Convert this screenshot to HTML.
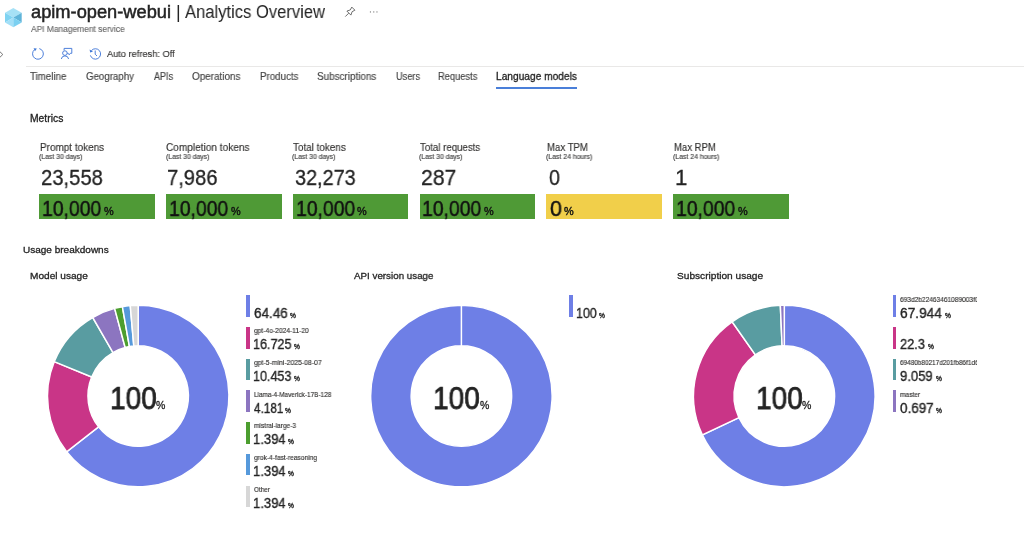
<!DOCTYPE html>
<html><head><meta charset="utf-8"><style>
html,body{margin:0;padding:0;background:#fff;width:1024px;height:534px;overflow:hidden;position:relative;font-family:"Liberation Sans", sans-serif;}
.t{position:absolute;white-space:nowrap;will-change:transform;}
.bar{position:absolute;top:194.4px;width:115.8px;height:24.5px;}
.lb{position:absolute;width:3.5px;height:21.7px;}
.hr{position:absolute;left:26px;top:66px;width:998px;height:1px;background:#e9e8e7;}
.ul{position:absolute;left:496.2px;top:87.2px;width:81px;height:2px;background:#4a7fd9;}
</style></head><body>
<div class="hr"></div>
<div class="ul"></div>
<div class="bar" style="left:39.10px;background:#4f9a36"></div>
<div class="bar" style="left:165.90px;background:#4f9a36"></div>
<div class="bar" style="left:292.70px;background:#4f9a36"></div>
<div class="bar" style="left:419.50px;background:#4f9a36"></div>
<div class="bar" style="left:546.30px;background:#f1cf4a"></div>
<div class="bar" style="left:673.10px;background:#4f9a36"></div>
<div class="lb" style="left:246.2px;top:295.3px;background:#6e7fe6"></div>
<div class="lb" style="left:246.2px;top:327.0px;background:#c93587"></div>
<div class="lb" style="left:246.2px;top:358.7px;background:#599ca1"></div>
<div class="lb" style="left:246.2px;top:390.4px;background:#8c75c0"></div>
<div class="lb" style="left:246.2px;top:422.1px;background:#4c9e2f"></div>
<div class="lb" style="left:246.2px;top:453.8px;background:#5699db"></div>
<div class="lb" style="left:246.2px;top:485.5px;background:#d7d7d7"></div>
<div class="lb" style="left:569.3px;top:295.3px;background:#6e7fe6"></div>
<div class="lb" style="left:892.6px;top:295.3px;background:#6e7fe6"></div>
<div class="lb" style="left:892.6px;top:327.0px;background:#c93587"></div>
<div class="lb" style="left:892.6px;top:358.7px;background:#599ca1"></div>
<div class="lb" style="left:892.6px;top:390.4px;background:#8c75c0"></div>
<svg style="position:absolute;left:0;top:0" width="1024" height="534" viewBox="0 0 1024 534">
<path d="M138.20,305.25 A90.75,90.75 0 1,1 66.64,451.80 L98.57,426.90 A50.25,50.25 0 1,0 138.20,345.75 Z" fill="#6e7fe6" stroke="#fff" stroke-width="1.5" stroke-linejoin="miter"/>
<path d="M66.64,451.80 A90.75,90.75 0 0,1 54.22,361.62 L91.70,376.96 A50.25,50.25 0 0,0 98.57,426.90 Z" fill="#c93587" stroke="#fff" stroke-width="1.5" stroke-linejoin="miter"/>
<path d="M54.22,361.62 A90.75,90.75 0 0,1 92.68,317.49 L112.99,352.53 A50.25,50.25 0 0,0 91.70,376.96 Z" fill="#599ca1" stroke="#fff" stroke-width="1.5" stroke-linejoin="miter"/>
<path d="M92.68,317.49 A90.75,90.75 0 0,1 114.63,308.36 L125.15,347.47 A50.25,50.25 0 0,0 112.99,352.53 Z" fill="#8c75c0" stroke="#fff" stroke-width="1.5" stroke-linejoin="miter"/>
<path d="M114.63,308.36 A90.75,90.75 0 0,1 122.38,306.64 L129.44,346.52 A50.25,50.25 0 0,0 125.15,347.47 Z" fill="#4c9e2f" stroke="#fff" stroke-width="1.5" stroke-linejoin="miter"/>
<path d="M122.38,306.64 A90.75,90.75 0 0,1 130.26,305.60 L133.80,345.94 A50.25,50.25 0 0,0 129.44,346.52 Z" fill="#5699db" stroke="#fff" stroke-width="1.5" stroke-linejoin="miter"/>
<path d="M130.26,305.60 A90.75,90.75 0 0,1 138.20,305.25 L138.20,345.75 A50.25,50.25 0 0,0 133.80,345.94 Z" fill="#d7d7d7" stroke="#fff" stroke-width="1.5" stroke-linejoin="miter"/><path d="M461.40,305.25 A90.75,90.75 0 1,1 461.399,305.25 L461.399,345.75 A50.25,50.25 0 1,0 461.40,345.75 Z" fill="#6e7fe6" stroke="#fff" stroke-width="1.5"/><path d="M784.30,305.25 A90.75,90.75 0 1,1 702.32,434.93 L738.91,417.56 A50.25,50.25 0 1,0 784.30,345.75 Z" fill="#6e7fe6" stroke="#fff" stroke-width="1.5" stroke-linejoin="miter"/>
<path d="M702.32,434.93 A90.75,90.75 0 0,1 732.09,321.77 L755.39,354.90 A50.25,50.25 0 0,0 738.91,417.56 Z" fill="#c93587" stroke="#fff" stroke-width="1.5" stroke-linejoin="miter"/>
<path d="M732.09,321.77 A90.75,90.75 0 0,1 780.33,305.34 L782.10,345.80 A50.25,50.25 0 0,0 755.39,354.90 Z" fill="#599ca1" stroke="#fff" stroke-width="1.5" stroke-linejoin="miter"/>
<path d="M780.33,305.34 A90.75,90.75 0 0,1 784.30,305.25 L784.30,345.75 A50.25,50.25 0 0,0 782.10,345.80 Z" fill="#8c75c0" stroke="#fff" stroke-width="1.5" stroke-linejoin="miter"/>
<!-- cube -->
<g>
<polygon points="13.3,8 21.7,12.8 13.3,17.6 5,12.8" fill="#a6e1f6"/>
<polygon points="21.7,12.8 21.7,22.4 13.3,17.6" fill="#5fb4d9"/>
<polygon points="5,12.8 13.3,17.6 5,22.4" fill="#7fd3f2"/>
<polygon points="5,22.4 13.3,17.6 13.3,27.2" fill="#a3dff7"/>
<polygon points="13.3,17.6 21.7,22.4 13.3,27.2" fill="#7bd0f1"/>
</g>
<!-- pin -->
<g fill="none" stroke="#4a4a4a" stroke-width="0.8" stroke-linejoin="round">
<path d="M345.3,16.6 L348.7,13.2"/>
<path d="M346.9,11.1 L350.3,9.9 L351.8,7.1 L354.9,10.2 L352.1,11.7 L350.9,15.1 Z"/>
</g>
<g fill="#777">
<rect x="369.9" y="11.4" width="1.1" height="1.1"/>
<rect x="373.2" y="11.4" width="1.1" height="1.1"/>
<rect x="376.4" y="11.4" width="1.1" height="1.1"/>
</g>
<!-- chevron -->
<path d="M0,51.8 L2.8,54.5 L0,57.2" fill="none" stroke="#666" stroke-width="0.9"/>
<!-- refresh -->
<g fill="none" stroke="#4479d8" stroke-width="0.95">
<path d="M39.3,48.6 A5.4,5.4 0 1,1 34.6,49.6"/>
</g>
<path d="M33.6,48.2 L36.8,48.4 L35.0,51.3 Z" fill="#3f78d6"/>
<!-- feedback -->
<g fill="none" stroke="#4479d8" stroke-width="0.95" stroke-linejoin="miter">
<circle cx="64.9" cy="53.1" r="2.3"/>
<path d="M61.3,59 A3.7,3.7 0 0,1 68.6,59"/>
<path d="M64.1,50.4 L64.1,48.4 L71.8,48.4 L71.8,53.3 L70.3,53.3 L69.2,54.8 L68.2,53.3 L67.3,53.3"/>
</g>
<!-- history -->
<g fill="none" stroke="#4479d8" stroke-width="0.95">
<path d="M91.4,50.6 A5.2,5.2 0 1,1 90.4,55.4"/>
<path d="M95.2,50.5 L95.2,54.2 L97,56"/>
</g>
<path d="M89.6,49.6 L90.2,52.6 L93,51.4 Z" fill="#3f78d6"/>

</svg>
<div class="t" style="left:31.00px;top:3.00px;font-size:18px;line-height:18px;color:#242424;transform:scaleX(1.0140);transform-origin:0 0;-webkit-text-stroke:0.5px #242424;">apim-open-webui</div>
<div class="t" style="left:175.60px;top:3.00px;font-size:18px;line-height:18px;color:#242424;">|</div>
<div class="t" style="left:185.00px;top:3.00px;font-size:18px;line-height:18px;color:#242424;transform:scaleX(0.9213);transform-origin:0 0;">Analytics Overview</div>
<div class="t" style="left:30.90px;top:25.00px;font-size:8.9px;line-height:8.9px;color:#6a6a6a;transform:scaleX(0.9454);transform-origin:0 0;-webkit-text-stroke:0.15px #6a6a6a;">API Management service</div>
<div class="t" style="left:107.30px;top:49.00px;font-size:9.7px;line-height:9.7px;color:#323130;transform:scaleX(0.9536);transform-origin:0 0;-webkit-text-stroke:0.15px #323130;">Auto refresh: Off</div>
<div class="t" style="left:30.20px;top:72.00px;font-size:10.2px;line-height:10.2px;color:#424242;transform:scaleX(0.9544);transform-origin:0 0;-webkit-text-stroke:0.15px #424242;">Timeline</div>
<div class="t" style="left:86.00px;top:72.00px;font-size:10.2px;line-height:10.2px;color:#424242;transform:scaleX(0.9511);transform-origin:0 0;-webkit-text-stroke:0.15px #424242;">Geography</div>
<div class="t" style="left:154.00px;top:72.00px;font-size:10.2px;line-height:10.2px;color:#424242;transform:scaleX(0.8870);transform-origin:0 0;-webkit-text-stroke:0.15px #424242;">APIs</div>
<div class="t" style="left:191.70px;top:72.00px;font-size:10.2px;line-height:10.2px;color:#424242;transform:scaleX(0.9711);transform-origin:0 0;-webkit-text-stroke:0.15px #424242;">Operations</div>
<div class="t" style="left:259.50px;top:72.00px;font-size:10.2px;line-height:10.2px;color:#424242;transform:scaleX(0.9574);transform-origin:0 0;-webkit-text-stroke:0.15px #424242;">Products</div>
<div class="t" style="left:317.00px;top:72.00px;font-size:10.2px;line-height:10.2px;color:#424242;transform:scaleX(0.9695);transform-origin:0 0;-webkit-text-stroke:0.15px #424242;">Subscriptions</div>
<div class="t" style="left:395.50px;top:72.00px;font-size:10.2px;line-height:10.2px;color:#424242;transform:scaleX(0.9053);transform-origin:0 0;-webkit-text-stroke:0.15px #424242;">Users</div>
<div class="t" style="left:438.30px;top:72.00px;font-size:10.2px;line-height:10.2px;color:#424242;transform:scaleX(0.9151);transform-origin:0 0;-webkit-text-stroke:0.15px #424242;">Requests</div>
<div class="t" style="left:496.30px;top:72.00px;font-size:10.2px;line-height:10.2px;color:#242424;transform:scaleX(0.9975);transform-origin:0 0;-webkit-text-stroke:0.3px #242424;">Language models</div>
<div class="t" style="left:30.10px;top:114.00px;font-size:10.2px;line-height:10.2px;color:#242424;transform:scaleX(1.0143);transform-origin:0 0;-webkit-text-stroke:0.3px #242424;">Metrics</div>
<div class="t" style="left:39.60px;top:142.00px;font-size:10.9px;line-height:10.9px;color:#323130;transform:scaleX(0.9128);transform-origin:0 0;-webkit-text-stroke:0.15px #323130;">Prompt tokens</div>
<div class="t" style="left:38.80px;top:153.00px;font-size:7.0px;line-height:7.0px;color:#424242;transform:scaleX(0.9790);transform-origin:0 0;-webkit-text-stroke:0.15px #424242;">(Last 30 days)</div>
<div class="t" style="left:40.59px;top:167.00px;font-size:22.3px;line-height:22.3px;color:#242424;transform:scaleX(0.9072);transform-origin:0 0;-webkit-text-stroke:0.3px #242424;">23,558</div>
<div class="t" style="left:42.03px;top:198.00px;font-size:22.3px;line-height:22.3px;color:#111111;transform:scaleX(0.8683);transform-origin:0 0;-webkit-text-stroke:0.45px #111111;">10,000</div>
<div class="t" style="left:103.70px;top:206.00px;font-size:10.9px;line-height:10.9px;color:#111111;-webkit-text-stroke:0.4px #111111;">%</div>
<div class="t" style="left:166.40px;top:142.00px;font-size:10.9px;line-height:10.9px;color:#323130;transform:scaleX(0.9256);transform-origin:0 0;-webkit-text-stroke:0.15px #323130;">Completion tokens</div>
<div class="t" style="left:165.60px;top:153.00px;font-size:7.0px;line-height:7.0px;color:#424242;transform:scaleX(0.9790);transform-origin:0 0;-webkit-text-stroke:0.15px #424242;">(Last 30 days)</div>
<div class="t" style="left:167.40px;top:167.00px;font-size:22.3px;line-height:22.3px;color:#242424;transform:scaleX(0.9045);transform-origin:0 0;-webkit-text-stroke:0.3px #242424;">7,986</div>
<div class="t" style="left:168.83px;top:198.00px;font-size:22.3px;line-height:22.3px;color:#111111;transform:scaleX(0.8683);transform-origin:0 0;-webkit-text-stroke:0.45px #111111;">10,000</div>
<div class="t" style="left:230.50px;top:206.00px;font-size:10.9px;line-height:10.9px;color:#111111;-webkit-text-stroke:0.4px #111111;">%</div>
<div class="t" style="left:293.20px;top:142.00px;font-size:10.9px;line-height:10.9px;color:#323130;transform:scaleX(0.9085);transform-origin:0 0;-webkit-text-stroke:0.15px #323130;">Total tokens</div>
<div class="t" style="left:292.40px;top:153.00px;font-size:7.0px;line-height:7.0px;color:#424242;transform:scaleX(0.9790);transform-origin:0 0;-webkit-text-stroke:0.15px #424242;">(Last 30 days)</div>
<div class="t" style="left:295.10px;top:167.00px;font-size:22.3px;line-height:22.3px;color:#242424;transform:scaleX(0.8894);transform-origin:0 0;-webkit-text-stroke:0.3px #242424;">32,273</div>
<div class="t" style="left:295.63px;top:198.00px;font-size:22.3px;line-height:22.3px;color:#111111;transform:scaleX(0.8683);transform-origin:0 0;-webkit-text-stroke:0.45px #111111;">10,000</div>
<div class="t" style="left:357.30px;top:206.00px;font-size:10.9px;line-height:10.9px;color:#111111;-webkit-text-stroke:0.4px #111111;">%</div>
<div class="t" style="left:420.00px;top:142.00px;font-size:10.9px;line-height:10.9px;color:#323130;transform:scaleX(0.8880);transform-origin:0 0;-webkit-text-stroke:0.15px #323130;">Total requests</div>
<div class="t" style="left:419.20px;top:153.00px;font-size:7.0px;line-height:7.0px;color:#424242;transform:scaleX(0.9790);transform-origin:0 0;-webkit-text-stroke:0.15px #424242;">(Last 30 days)</div>
<div class="t" style="left:420.95px;top:167.00px;font-size:22.3px;line-height:22.3px;color:#242424;transform:scaleX(0.9497);transform-origin:0 0;-webkit-text-stroke:0.3px #242424;">287</div>
<div class="t" style="left:422.43px;top:198.00px;font-size:22.3px;line-height:22.3px;color:#111111;transform:scaleX(0.8683);transform-origin:0 0;-webkit-text-stroke:0.45px #111111;">10,000</div>
<div class="t" style="left:484.10px;top:206.00px;font-size:10.9px;line-height:10.9px;color:#111111;-webkit-text-stroke:0.4px #111111;">%</div>
<div class="t" style="left:546.80px;top:142.00px;font-size:10.9px;line-height:10.9px;color:#323130;transform:scaleX(0.8814);transform-origin:0 0;-webkit-text-stroke:0.15px #323130;">Max TPM</div>
<div class="t" style="left:546.00px;top:153.00px;font-size:7.0px;line-height:7.0px;color:#424242;transform:scaleX(0.9840);transform-origin:0 0;-webkit-text-stroke:0.15px #424242;">(Last 24 hours)</div>
<div class="t" style="left:548.70px;top:167.00px;font-size:22.3px;line-height:22.3px;color:#242424;transform:scaleX(0.8833);transform-origin:0 0;-webkit-text-stroke:0.3px #242424;">0</div>
<div class="t" style="left:550.10px;top:198.00px;font-size:22.3px;line-height:22.3px;color:#111111;transform:scaleX(0.9583);transform-origin:0 0;-webkit-text-stroke:0.45px #111111;">0</div>
<div class="t" style="left:564.00px;top:206.00px;font-size:10.9px;line-height:10.9px;color:#111111;-webkit-text-stroke:0.4px #111111;">%</div>
<div class="t" style="left:673.60px;top:142.00px;font-size:10.9px;line-height:10.9px;color:#323130;transform:scaleX(0.8758);transform-origin:0 0;-webkit-text-stroke:0.15px #323130;">Max RPM</div>
<div class="t" style="left:672.80px;top:153.00px;font-size:7.0px;line-height:7.0px;color:#424242;transform:scaleX(0.9840);transform-origin:0 0;-webkit-text-stroke:0.15px #424242;">(Last 24 hours)</div>
<div class="t" style="left:674.50px;top:167.00px;font-size:22.3px;line-height:22.3px;color:#242424;-webkit-text-stroke:0.3px #242424;">1</div>
<div class="t" style="left:676.03px;top:198.00px;font-size:22.3px;line-height:22.3px;color:#111111;transform:scaleX(0.8683);transform-origin:0 0;-webkit-text-stroke:0.45px #111111;">10,000</div>
<div class="t" style="left:737.70px;top:206.00px;font-size:10.9px;line-height:10.9px;color:#111111;-webkit-text-stroke:0.4px #111111;">%</div>
<div class="t" style="left:23.00px;top:245.00px;font-size:9.8px;line-height:9.8px;color:#242424;transform:scaleX(1.0218);transform-origin:0 0;-webkit-text-stroke:0.3px #242424;">Usage breakdowns</div>
<div class="t" style="left:30.20px;top:271.00px;font-size:9.8px;line-height:9.8px;color:#242424;transform:scaleX(1.0309);transform-origin:0 0;-webkit-text-stroke:0.3px #242424;">Model usage</div>
<div class="t" style="left:353.50px;top:271.00px;font-size:9.8px;line-height:9.8px;color:#242424;transform:scaleX(0.9980);transform-origin:0 0;-webkit-text-stroke:0.3px #242424;">API version usage</div>
<div class="t" style="left:676.60px;top:271.00px;font-size:9.8px;line-height:9.8px;color:#242424;transform:scaleX(1.0336);transform-origin:0 0;-webkit-text-stroke:0.3px #242424;">Subscription usage</div>
<div class="t" style="left:109.56px;top:383.00px;font-size:30.5px;line-height:30.5px;color:#242424;transform:scaleX(0.9181);transform-origin:0 0;-webkit-text-stroke:0.75px #242424;">100</div>
<div class="t" style="left:156.30px;top:400.00px;font-size:10.5px;line-height:10.5px;color:#242424;-webkit-text-stroke:0.3px #242424;">%</div>
<div class="t" style="left:432.76px;top:383.00px;font-size:30.5px;line-height:30.5px;color:#242424;transform:scaleX(0.9181);transform-origin:0 0;-webkit-text-stroke:0.75px #242424;">100</div>
<div class="t" style="left:479.50px;top:400.00px;font-size:10.5px;line-height:10.5px;color:#242424;-webkit-text-stroke:0.3px #242424;">%</div>
<div class="t" style="left:755.66px;top:383.00px;font-size:30.5px;line-height:30.5px;color:#242424;transform:scaleX(0.9181);transform-origin:0 0;-webkit-text-stroke:0.75px #242424;">100</div>
<div class="t" style="left:802.40px;top:400.00px;font-size:10.5px;line-height:10.5px;color:#242424;-webkit-text-stroke:0.3px #242424;">%</div>
<div class="t" style="left:253.60px;top:307.00px;font-size:13.8px;line-height:13.8px;color:#242424;transform:scaleX(0.9784);transform-origin:0 0;-webkit-text-stroke:0.35px #242424;">64.46</div>
<div class="t" style="left:290.20px;top:313.00px;font-size:6.6px;line-height:6.6px;color:#242424;-webkit-text-stroke:0.35px #242424;">%</div>
<div class="t" style="left:253.60px;top:327.00px;font-size:7.3px;line-height:7.3px;color:#323130;transform:scaleX(0.9157);transform-origin:0 0;-webkit-text-stroke:0.15px #323130;">gpt-4o-2024-11-20</div>
<div class="t" style="left:252.69px;top:338.00px;font-size:13.8px;line-height:13.8px;color:#242424;transform:scaleX(0.9127);transform-origin:0 0;-webkit-text-stroke:0.35px #242424;">16.725</div>
<div class="t" style="left:294.00px;top:344.00px;font-size:6.6px;line-height:6.6px;color:#242424;-webkit-text-stroke:0.35px #242424;">%</div>
<div class="t" style="left:253.60px;top:359.00px;font-size:7.3px;line-height:7.3px;color:#323130;transform:scaleX(0.9371);transform-origin:0 0;-webkit-text-stroke:0.15px #323130;">gpt-5-mini-2025-08-07</div>
<div class="t" style="left:252.69px;top:370.00px;font-size:13.8px;line-height:13.8px;color:#242424;transform:scaleX(0.9103);transform-origin:0 0;-webkit-text-stroke:0.35px #242424;">10.453</div>
<div class="t" style="left:293.90px;top:376.00px;font-size:6.6px;line-height:6.6px;color:#242424;-webkit-text-stroke:0.35px #242424;">%</div>
<div class="t" style="left:253.60px;top:391.00px;font-size:7.3px;line-height:7.3px;color:#323130;transform:scaleX(0.8778);transform-origin:0 0;-webkit-text-stroke:0.15px #323130;">Llama-4-Maverick-17B-128</div>
<div class="t" style="left:253.60px;top:402.00px;font-size:13.8px;line-height:13.8px;color:#242424;transform:scaleX(0.8507);transform-origin:0 0;-webkit-text-stroke:0.35px #242424;">4.181</div>
<div class="t" style="left:284.90px;top:408.00px;font-size:6.6px;line-height:6.6px;color:#242424;-webkit-text-stroke:0.35px #242424;">%</div>
<div class="t" style="left:253.60px;top:422.00px;font-size:7.3px;line-height:7.3px;color:#323130;transform:scaleX(0.9019);transform-origin:0 0;-webkit-text-stroke:0.15px #323130;">mistral-large-3</div>
<div class="t" style="left:252.65px;top:433.00px;font-size:13.8px;line-height:13.8px;color:#242424;transform:scaleX(0.9453);transform-origin:0 0;-webkit-text-stroke:0.35px #242424;">1.394</div>
<div class="t" style="left:288.10px;top:439.00px;font-size:6.6px;line-height:6.6px;color:#242424;-webkit-text-stroke:0.35px #242424;">%</div>
<div class="t" style="left:253.60px;top:454.00px;font-size:7.3px;line-height:7.3px;color:#323130;transform:scaleX(0.9092);transform-origin:0 0;-webkit-text-stroke:0.15px #323130;">grok-4-fast-reasoning</div>
<div class="t" style="left:252.65px;top:465.00px;font-size:13.8px;line-height:13.8px;color:#242424;transform:scaleX(0.9453);transform-origin:0 0;-webkit-text-stroke:0.35px #242424;">1.394</div>
<div class="t" style="left:288.10px;top:471.00px;font-size:6.6px;line-height:6.6px;color:#242424;-webkit-text-stroke:0.35px #242424;">%</div>
<div class="t" style="left:253.60px;top:486.00px;font-size:7.3px;line-height:7.3px;color:#323130;transform:scaleX(0.8714);transform-origin:0 0;-webkit-text-stroke:0.15px #323130;">Other</div>
<div class="t" style="left:252.65px;top:497.00px;font-size:13.8px;line-height:13.8px;color:#242424;transform:scaleX(0.9453);transform-origin:0 0;-webkit-text-stroke:0.35px #242424;">1.394</div>
<div class="t" style="left:288.10px;top:503.00px;font-size:6.6px;line-height:6.6px;color:#242424;-webkit-text-stroke:0.35px #242424;">%</div>
<div class="t" style="left:575.80px;top:307.00px;font-size:13.8px;line-height:13.8px;color:#242424;transform:scaleX(0.9040);transform-origin:0 0;-webkit-text-stroke:0.35px #242424;">100</div>
<div class="t" style="left:599.40px;top:313.00px;font-size:6.6px;line-height:6.6px;color:#242424;-webkit-text-stroke:0.35px #242424;">%</div>
<div class="t" style="left:900.00px;top:296.00px;font-size:7.3px;line-height:7.3px;color:#323130;transform:scaleX(0.9003);transform-origin:0 0;-webkit-text-stroke:0.15px #323130;width:86.4px;overflow:hidden;">693d2b22463461089003f0</div>
<div class="t" style="left:900.00px;top:307.00px;font-size:13.8px;line-height:13.8px;color:#242424;transform:scaleX(0.9923);transform-origin:0 0;-webkit-text-stroke:0.35px #242424;">67.944</div>
<div class="t" style="left:944.70px;top:313.00px;font-size:6.6px;line-height:6.6px;color:#242424;-webkit-text-stroke:0.35px #242424;">%</div>
<div class="t" style="left:900.00px;top:338.00px;font-size:13.8px;line-height:13.8px;color:#242424;transform:scaleX(0.9272);transform-origin:0 0;-webkit-text-stroke:0.35px #242424;">22.3</div>
<div class="t" style="left:927.70px;top:344.00px;font-size:6.6px;line-height:6.6px;color:#242424;-webkit-text-stroke:0.35px #242424;">%</div>
<div class="t" style="left:900.00px;top:359.00px;font-size:7.3px;line-height:7.3px;color:#323130;transform:scaleX(0.8799);transform-origin:0 0;-webkit-text-stroke:0.15px #323130;width:88.4px;overflow:hidden;">69480b80217d201fb86f1d6</div>
<div class="t" style="left:900.00px;top:370.00px;font-size:13.8px;line-height:13.8px;color:#242424;transform:scaleX(0.9468);transform-origin:0 0;-webkit-text-stroke:0.35px #242424;">9.059</div>
<div class="t" style="left:935.50px;top:376.00px;font-size:6.6px;line-height:6.6px;color:#242424;-webkit-text-stroke:0.35px #242424;">%</div>
<div class="t" style="left:900.00px;top:391.00px;font-size:7.3px;line-height:7.3px;color:#323130;transform:scaleX(0.9095);transform-origin:0 0;-webkit-text-stroke:0.15px #323130;">master</div>
<div class="t" style="left:900.00px;top:402.00px;font-size:13.8px;line-height:13.8px;color:#242424;transform:scaleX(0.9748);transform-origin:0 0;-webkit-text-stroke:0.35px #242424;">0.697</div>
<div class="t" style="left:935.50px;top:408.00px;font-size:6.6px;line-height:6.6px;color:#242424;-webkit-text-stroke:0.35px #242424;">%</div>
</body></html>
